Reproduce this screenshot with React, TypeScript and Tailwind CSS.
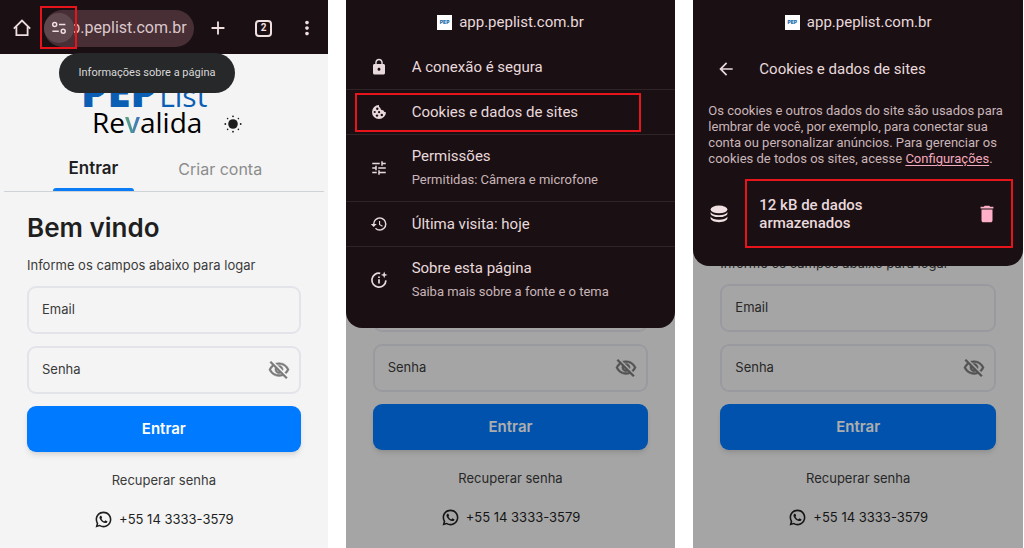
import { useId } from "react";
import type { ReactNode } from "react";
import type { IconType } from "react-icons";
import {
  MdAdd,
  MdArrowBack,
  MdDelete,
  MdHistory,
  MdLock,
  MdMoreVert,
  MdOutlineVisibilityOff,
  MdTune,
} from "react-icons/md";
import { RiWhatsappLine } from "react-icons/ri";

const HomeIcon = () => (
  <svg viewBox="0 0 20 20" className="size-5" fill="none" stroke="currentColor" strokeWidth="1.8">
    <path d="M1.8 10.6 10 2.6l8.2 8" />
    <path d="M4.4 8.6v8.6h11.2V8.6" />
  </svg>
);

const SiteInfoIcon = () => (
  <svg viewBox="0 0 16 16" className="size-4" fill="none" stroke="currentColor" strokeWidth="1.5">
    <circle cx="3.7" cy="4.6" r="2" />
    <path d="M8 4.6h6.4M1.4 11.2h6.4" />
    <circle cx="12.2" cy="11.2" r="2" />
  </svg>
);

const SunIcon = () => (
  <svg viewBox="0 0 18 18" className="size-[18px]" fill="currentColor">
    <circle cx="9" cy="9" r="4.8" />
    <circle cx="9" cy="1.3" r="0.9" />
    <circle cx="9" cy="16.7" r="0.9" />
    <circle cx="1.3" cy="9" r="0.9" />
    <circle cx="16.7" cy="9" r="0.9" />
    <circle cx="3.6" cy="3.6" r="0.8" />
    <circle cx="14.4" cy="3.6" r="0.8" />
    <circle cx="3.6" cy="14.4" r="0.8" />
    <circle cx="14.4" cy="14.4" r="0.8" />
  </svg>
);

const CookieIcon = () => (
  <svg viewBox="0 0 16 16" className="size-4">
    <path
      fill="currentColor"
      d="M8 1a7 7 0 1 0 7 7.2 2.6 2.6 0 0 1-2.7-2 2.7 2.7 0 0 1-3-2.3A2.6 2.6 0 0 1 8 1z"
    />
    <g fill="#1a1013">
      <circle cx="6.3" cy="4.7" r="1.2" />
      <circle cx="3.7" cy="8" r="1.1" />
      <circle cx="8.1" cy="8.2" r="1.1" />
      <circle cx="6" cy="11.6" r="1.2" />
      <circle cx="10.8" cy="11" r="1.2" />
    </g>
  </svg>
);

const AboutIcon = () => (
  <svg viewBox="0 0 18 18" className="size-[18px]" fill="none" stroke="currentColor" strokeWidth="1.7">
    <path d="M10.2 2.3A7 7 0 1 0 15.9 9.4" />
    <path d="M9 8.2v4.4M9 5.4v1.6" />
    <path
      d="M14.2.6l.9 2.4 2.4.9-2.4.9-.9 2.4-.9-2.4-2.4-.9 2.4-.9z"
      fill="currentColor"
      stroke="none"
    />
  </svg>
);

const StorageIcon = () => (
  <svg viewBox="0 0 18 18" className="size-[18px] text-[#f0dfe1]" fill="currentColor">
    <ellipse cx="9" cy="4.4" rx="8.4" ry="3.9" />
    <path d="M.6 7.2C1.8 9.2 5 10.2 9 10.2s7.2-1 8.4-3v1.2c0 2-3.600 3.700-8.400 3.700S.6 10.400.6 8.400z" />
    <path d="M.6 11.8C1.8 13.8 5 14.8 9 14.8s7.2-1 8.4-3v1.5c0 2-3.600 3.900-8.400 3.900s-8.400-1.900-8.400-3.900z" />
  </svg>
);

const Field = ({ label, type, children }: { label: string; type: string; children?: ReactNode }) => {
  const id = useId();

  return (
    <div className="flex h-12 items-center rounded-[9px] border-2 border-[#e2e4ea] pr-[9px] pl-[13px]">
      <label htmlFor={id} className="sr-only">
        {label}
      </label>
      <input
        id={id}
        type={type}
        placeholder={label}
        className="w-full min-w-0 bg-transparent text-[13px] text-[#3a3a3a] outline-none placeholder:text-[#3a3a3a]"
      />
      {children}
    </div>
  );
};

const Logo = () => (
  <div className="flex flex-col pl-[81px]">
    <div className="flex h-[52px] items-baseline gap-0.5 pt-[22px] font-['Open_Sans',sans-serif] leading-[30px] text-[#0a5fb4]">
      <span className="text-[42px] font-extrabold">PEP</span>
      <span className="text-[30px]">List</span>
    </div>
    <div className="flex items-center gap-[22px] pl-[11px] text-black">
      <span className="font-['Open_Sans',sans-serif] text-[28px] leading-8">
        Re
        <span className="bg-linear-to-r from-[#5fa57c] to-[#3c6fc0] bg-clip-text font-semibold text-transparent">
          v
        </span>
        alida
      </span>
      <button type="button" aria-label="Tema" className="pt-1 text-[#1c1c1c]">
        <SunIcon />
      </button>
    </div>
  </div>
);

const LoginPage = () => (
  <main className="font-[Inter,sans-serif] text-[#1f1f1f]">
    <Logo />
    <div className="mx-1 mt-2 grid grid-cols-2 border-b border-[#cfd2d6] pr-10 pl-[26px]">
      <button type="button" className="relative h-[45px] text-[17px] font-semibold">
        Entrar
        <span className="absolute inset-x-[23px] bottom-0 h-[3px] rounded-t-sm bg-[#0a7cf5]" />
      </button>
      <button type="button" className="h-[45px] text-base text-[#8c8c8c]">
        Criar conta
      </button>
    </div>
    <form className="flex flex-col px-[27px]" onSubmit={(e) => e.preventDefault()}>
      <h1 className="mt-5 text-[26px] leading-8 font-semibold">Bem vindo</h1>
      <p className="my-[11px] text-[13px] leading-5 text-[#3a3a3a]">Informe os campos abaixo para logar</p>
      <div className="flex flex-col gap-3">
        <Field label="Email" type="email" />
        <Field label="Senha" type="password">
          <button type="button" aria-label="Mostrar senha" className="text-[#7a7a7a]">
            <MdOutlineVisibilityOff className="size-[22px] [&>path:first-child]:stroke-none [&>path:last-child]:stroke-current [&>path:last-child]:stroke-[0.5]" />
          </button>
        </Field>
        <button
          type="submit"
          className="h-[46px] rounded-[9px] bg-[#007aff] text-[15px] font-semibold text-white shadow-md"
        >
          Entrar
        </button>
      </div>
      <a href="#recuperar" className="mt-[18px] self-center text-[13px] leading-5 text-[#3a3a3a]">
        Recuperar senha
      </a>
      <a href="tel:+551433333579" className="my-[19px] flex items-center gap-1.5 self-center text-[13px] leading-5">
        <RiWhatsappLine className="size-[19px]" />
        +55 14 3333-3579
      </a>
    </form>
  </main>
);

const Toolbar = () => (
  <header className="relative flex h-[54px] items-center bg-[#1a1013] pt-0.5 text-[#f0dfe1]">
    <button type="button" aria-label="Início" className="flex w-11 justify-center">
      <HomeIcon />
    </button>
    <div className="relative flex h-[37px] min-w-0 flex-1 items-center rounded-full bg-[#472f35]">
      <button
        type="button"
        aria-label="Informações do site"
        className="flex size-[30px] shrink-0 items-center justify-center rounded-full bg-[#5e484e]"
      >
        <SiteInfoIcon />
      </button>
      <div className="mr-[7px] flex min-w-0 flex-1 justify-end overflow-hidden font-[Roboto,sans-serif] text-base text-[#dcc8cc]">
        app.peplist.com.br
      </div>
      <span className="absolute -top-1 -left-1 h-[43px] w-[37px] border-2 border-[#e8141c]" />
    </div>
    <button type="button" aria-label="Nova guia" className="flex w-12 justify-center">
      <MdAdd className="size-[22px]" />
    </button>
    <button type="button" aria-label="Guias" className="flex w-11 justify-center">
      <span className="flex size-[17px] items-center justify-center rounded-[4px] border-2 border-current font-[Roboto,sans-serif] text-[10px] leading-none font-bold">
        2
      </span>
    </button>
    <button type="button" aria-label="Mais" className="flex w-[42px] justify-center">
      <MdMoreVert className="size-[22px]" />
    </button>
    <div
      role="tooltip"
      className="absolute top-[53px] left-[59px] flex h-10 w-44 items-center justify-center rounded-full bg-[#27282a] font-[Roboto,sans-serif] text-[11px] text-[#d8d8d8]"
    >
      Informações sobre a página
    </div>
  </header>
);

const SiteTitle = () => (
  <div className="flex h-[45px] items-center justify-center gap-[7px] text-[15px]">
    <span className="flex size-[15px] items-center justify-center bg-white font-[Inter,sans-serif] text-[5px] font-black text-[#1f6fae]">
      PEP
    </span>
    app.peplist.com.br
  </div>
);

type Item = {
  icon: IconType | (() => ReactNode);
  title: string;
  detail?: string;
  marked?: boolean;
};

const items: Item[] = [
  { icon: MdLock, title: "A conexão é segura" },
  { icon: CookieIcon, title: "Cookies e dados de sites", marked: true },
  { icon: MdTune, title: "Permissões", detail: "Permitidas: Câmera e microfone" },
  { icon: MdHistory, title: "Última visita: hoje" },
  { icon: AboutIcon, title: "Sobre esta página", detail: "Saiba mais sobre a fonte e o tema" },
];

const SiteInfoSheet = () => (
  <section className="absolute inset-x-0 top-0 rounded-b-2xl bg-[#1a1013] pb-[15px] font-[Roboto,sans-serif] text-[#e9d9dc]">
    <SiteTitle />
    <ul className="divide-y divide-[#2e2326]">
      {items.map(({ icon: Icon, title, detail, marked }) => (
        <li key={title} className="relative">
          <button type="button" className="flex min-h-11 w-full items-center py-[11px] text-left">
            <span className="flex w-[66px] justify-center text-[18px]">
              <Icon />
            </span>
            <span className="flex flex-col gap-1">
              <span className="text-[15px] leading-5">{title}</span>
              {detail && <span className="text-[13px] leading-5 text-[#c9b5b9]">{detail}</span>}
            </span>
          </button>
          {marked && (
            <span className="absolute top-[3px] right-[34px] bottom-[2px] left-[9px] border-2 border-[#e8141c]" />
          )}
        </li>
      ))}
    </ul>
  </section>
);

const CookiesSheet = () => (
  <section className="absolute inset-x-0 top-0 rounded-b-2xl bg-[#1a1013] pb-[18px] font-[Roboto,sans-serif] text-[#e9d9dc]">
    <SiteTitle />
    <div className="flex h-12 items-center text-[15px]">
      <button type="button" aria-label="Voltar" className="flex w-[66px] justify-center">
        <MdArrowBack className="size-5" />
      </button>
      <h2>Cookies e dados de sites</h2>
    </div>
    <p className="mt-[10px] pr-2 pl-[15px] text-[13px] leading-4 text-[#c9b5b9]">
      Os cookies e outros dados do site são usados para lembrar de você, por exemplo, para conectar sua conta ou
      personalizar anúncios. Para gerenciar os cookies de todos os sites, acesse{" "}
      <a href="#configuracoes" className="text-[#f3a9bd] underline underline-offset-2">
        Configurações
      </a>
      .
    </p>
    <div className="mt-3 mr-[10px] flex items-center">
      <span className="flex w-[52px] justify-center">
        <StorageIcon />
      </span>
      <div className="flex h-[69px] flex-1 items-center justify-between border-2 border-[#e8141c] pr-[13px] pl-3">
        <p className="w-32 text-[15px] leading-[18px] font-medium">12 kB de dados armazenados</p>
        <button type="button" aria-label="Excluir dados" className="text-[#ffb0c8]">
          <MdDelete className="size-[22px]" />
        </button>
      </div>
    </div>
  </section>
);

const DimmedScreen = ({ children }: { children: ReactNode }) => (
  <div className="relative overflow-hidden bg-[#f4f4f4] pt-[52px]">
    <LoginPage />
    <div className="absolute inset-0 bg-black/32" />
    {children}
  </div>
);

const App = () => (
  <div className="grid min-h-screen grid-cols-[328fr_330fr_330fr] gap-x-[18px] bg-white pr-px">
    <div className="overflow-hidden bg-[#f4f4f4]">
      <Toolbar />
      <LoginPage />
    </div>
    <DimmedScreen>
      <SiteInfoSheet />
    </DimmedScreen>
    <DimmedScreen>
      <CookiesSheet />
    </DimmedScreen>
  </div>
);

export default App;
